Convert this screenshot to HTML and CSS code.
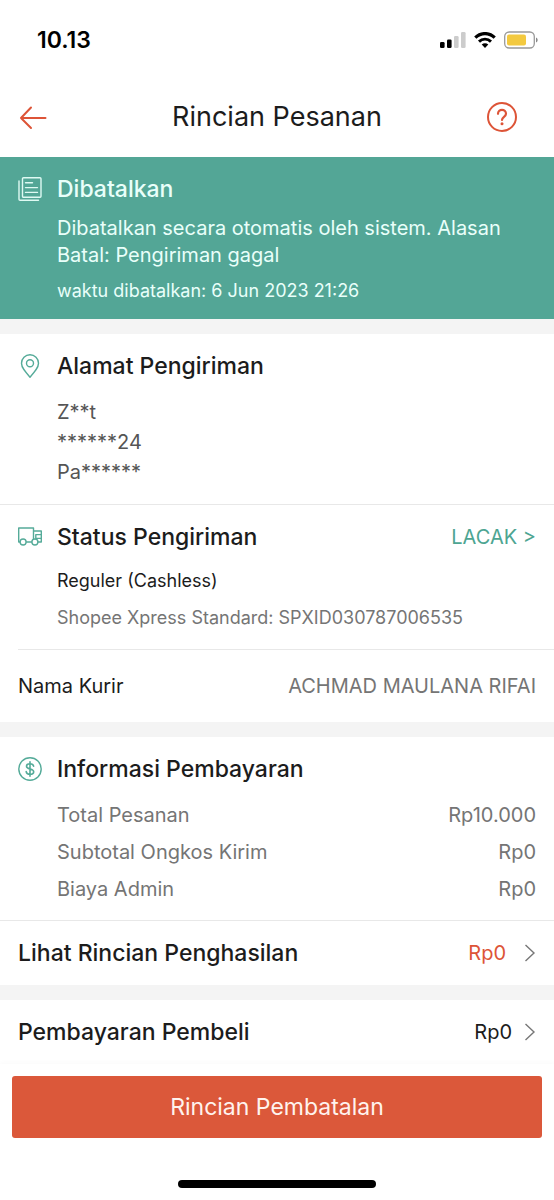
FILE: index.html
```html
<!DOCTYPE html>
<html lang="id">
<head>
<meta charset="utf-8">
<meta name="viewport" content="width=device-width, initial-scale=1">
<title>Rincian Pesanan</title>
<link rel="stylesheet" href="styles.css">
</head>
<body>
<div class="status-bar">
  <span class="clock">10.13</span>
  <div class="indicators">
    <svg width="26" height="16" viewBox="0 0 26 16" aria-hidden="true">
      <rect x="0" y="10" width="4.600" height="6" rx="1.300" fill="#000"/>
      <rect x="7" y="7.500" width="4.600" height="8.500" rx="1.300" fill="#000"/>
      <rect x="14" y="4" width="4.600" height="12" rx="1.300" fill="#ccc"/>
      <rect x="21" y="0" width="4.600" height="16" rx="1.300" fill="#ccc"/>
    </svg>
    <svg width="22" height="16" viewBox="0 0 22 16" aria-hidden="true">
      <path d="M1.300 5.600C6.800.2 15.200.2 20.700 5.600" fill="none" stroke="#000" stroke-width="3.200"/>
      <path d="M5 9.600c3.400-3.300 8.600-3.300 12 0" fill="none" stroke="#000" stroke-width="2.900"/>
      <path d="M11 16l-3.300-3.400c1.900-1.700 4.700-1.700 6.600 0z" fill="#000"/>
    </svg>
    <svg width="34" height="18" viewBox="0 0 34 18" aria-hidden="true">
      <rect x=".7" y="1" width="29.600" height="16" rx="4.500" fill="none" stroke="#999" stroke-width="1.300"/>
      <rect x="3" y="3.500" width="19" height="11" rx="2" fill="#f3c93f"/>
      <path d="M32 6.500c2.200.7 2.200 4.300 0 5z" fill="#888"/>
    </svg>
  </div>
</div>

<header class="nav">
  <button class="icon-button" type="button" aria-label="Kembali">
    <svg width="30" height="30" viewBox="0 0 30 30" fill="none" stroke="#dd5437" stroke-width="2" stroke-linecap="round" stroke-linejoin="round" aria-hidden="true"><path d="M27.500 16H3M13 5.500L3 16l10 10"/></svg>
  </button>
  <h1 class="nav-title">Rincian Pesanan</h1>
  <button class="icon-button help" type="button" aria-label="Bantuan">
    <svg width="30" height="30" viewBox="0 0 30 30" fill="none" stroke="#dd5437" stroke-width="2" stroke-linecap="round" aria-hidden="true"><circle cx="15" cy="15" r="14"/><path stroke-width="2.200" d="M11 11.800c0-5.300 8-5.300 8 0 0 3-4 3.200-4 6.200"/><circle cx="15" cy="21.800" r="1.500" fill="#dd5437" stroke="none"/></svg>
  </button>
</header>

<main>
  <section class="section section-banner">
    <div class="section-head">
      <svg class="section-icon" viewBox="0 0 24 24" fill="none" stroke="#dffaf3" stroke-width="1.400" stroke-linecap="round" stroke-linejoin="round" aria-hidden="true"><rect x="4.500" y=".8" width="18.500" height="19.500" rx="1"/><path d="M1 4v18.200q0 1 1 1h18.500M7.500 5.800h7M7.500 10.600h12M7.500 15.400h12"/></svg>
      <h2 class="heading">Dibatalkan</h2>
    </div>
    <p class="banner-text">Dibatalkan secara otomatis oleh sistem. Alasan Batal: Pengiriman gagal</p>
    <p class="banner-time">waktu dibatalkan: 6 Jun 2023 21:26</p>
  </section>

  <section class="section section-address gap-before">
    <div class="section-head">
      <svg class="section-icon" viewBox="0 0 24 24" fill="none" stroke="#55ab99" stroke-width="1.400" stroke-linejoin="round" aria-hidden="true"><path d="M12 23.200C7 17.500 3.500 13.500 3.500 9.200a8.500 8.500 0 0 1 17 0c0 4.300-3.500 8.300-8.500 14z"/><circle cx="12" cy="9.300" r="3.500"/></svg>
      <h2 class="heading">Alamat Pengiriman</h2>
    </div>
    <address class="address">Z**t<br>******24<br>Pa******</address>
  </section>

  <section class="section-shipping">
    <div class="section shipping">
      <div class="section-head">
        <svg class="section-icon" viewBox="0 0 24 24" fill="none" stroke="#55ab99" stroke-width="1.400" stroke-linejoin="round" aria-hidden="true"><path d="M2.100 17H.7V3h14.800v14H8.100M15.500 6h7.800v11h-3.400M23.300 9.600h-5.500v3.800h5.500M14 17h-5.900"/><circle cx="5.100" cy="17" r="3"/><circle cx="16.900" cy="17" r="3" fill="#fff"/></svg>
        <h2 class="heading">Status Pengiriman</h2>
        <a class="track" href="#lacak">LACAK &gt;</a>
      </div>
      <p class="service">Reguler (Cashless)</p>
      <p class="courier">Shopee Xpress Standard: SPXID030787006535</p>
    </div>
    <dl class="driver">
      <dt>Nama Kurir</dt>
      <dd class="muted">ACHMAD MAULANA RIFAI</dd>
    </dl>
  </section>

  <section class="section section-payment gap-before">
    <div class="section-head">
      <svg class="section-icon" viewBox="0 0 24 24" fill="none" stroke="#55ab99" stroke-width="1.400" stroke-linecap="round" aria-hidden="true"><circle cx="12" cy="12" r="11.200"/><path stroke-width="1.600" d="M15.600 9.200c-.3-1.700-1.700-2.500-3.600-2.500-2 0-3.500.9-3.500 2.500 0 3.700 7.200 1.700 7.200 5.500 0 1.700-1.600 2.600-3.700 2.600s-3.600-.9-3.800-2.700M12 4.700v14.600"/></svg>
      <h2 class="heading">Informasi Pembayaran</h2>
    </div>
    <dl class="costs muted">
      <div class="cost"><dt>Total Pesanan</dt><dd>Rp10.000</dd></div>
      <div class="cost"><dt>Subtotal Ongkos Kirim</dt><dd>Rp0</dd></div>
      <div class="cost"><dt>Biaya Admin</dt><dd>Rp0</dd></div>
    </dl>
  </section>

  <a class="link-row" href="#penghasilan">
    <span class="heading">Lihat Rincian Penghasilan</span>
    <span class="amount amount-accent">Rp0</span>
    <svg class="chevron" viewBox="0 0 12 18" aria-hidden="true"><path d="M1.500 1l8.500 8-8.500 8"/></svg>
  </a>
  <a class="link-row gap-before" href="#pembeli">
    <span class="heading">Pembayaran Pembeli</span>
    <span class="amount amount-near">Rp0</span>
    <svg class="chevron" viewBox="0 0 12 18" aria-hidden="true"><path d="M1.500 1l8.500 8-8.500 8"/></svg>
  </a>
</main>

<footer class="footer">
  <button class="primary" type="button">Rincian Pembatalan</button>
  <div class="home-indicator"></div>
</footer>
</body>
</html>
```
FILE: styles.css
```css
* { box-sizing: border-box; }

body {
  margin: 0;
  min-height: 100vh;
  display: flex;
  flex-direction: column;
  background: #fff;
  color: #1c1c1c;
  font-family: Inter, "Liberation Sans", sans-serif;
  font-size: 20px;
}

h1, h2, p, dl, dd { margin: 0; }
a { color: inherit; text-decoration: none; }
button { border: 0; padding: 0; background: none; font: inherit; cursor: pointer; }
svg { display: block; flex: none; }

.status-bar {
  display: flex;
  justify-content: space-between;
  align-items: center;
  height: 80px;
  padding: 0 16px 0 37px;
}
.clock { color: #000; font-size: 23px; font-weight: 600; }
.indicators { display: flex; align-items: center; gap: 8px; }

.nav {
  display: grid;
  grid-template-columns: 1fr auto 1fr;
  align-items: center;
  height: 77px;
  padding: 0 18px 4px;
}
.icon-button { width: 30px; height: 30px; }
.help { justify-self: end; margin-right: 19px; }
.nav-title { font-size: 27px; font-weight: 400; line-height: 36px; }

.section { padding: 18px 18px 12px 57px; }
.section-head { display: flex; align-items: center; margin-left: -39px; }
.section-icon { width: 24px; height: 24px; margin-right: 15px; }
.heading { font-size: 23px; font-weight: 500; line-height: 28px; }
.gap-before { border-top: 15px solid #f4f4f4; }
.muted { color: #757575; }

.section-banner { padding-bottom: 16px; background: #53a696; color: #e9fffa; }
.banner-text { margin-top: 12px; font-size: 20px; line-height: 27px; }
.banner-time { margin-top: 10px; font-size: 18px; line-height: 24px; }

.section-address { padding-bottom: 17px; }
.address { margin-top: 17px; color: #555; font-style: normal; line-height: 30px; }

.section-shipping { border-top: 1px solid #e8e8e8; }
.shipping { padding-bottom: 19px; }
.track { margin-left: auto; color: #4da592; }
.service, .courier { font-size: 18px; line-height: 24px; }
.service { margin-top: 18px; }
.courier { margin-top: 13px; color: #757575; }
.driver {
  display: flex;
  justify-content: space-between;
  align-items: center;
  min-height: 73px;
  margin-left: 18px;
  padding-right: 18px;
  border-top: 1px solid #e8e8e8;
}

.costs { margin-top: 14px; }
.cost { display: flex; justify-content: space-between; line-height: 37px; }

.link-row { display: flex; align-items: center; min-height: 64px; padding: 0 18px; }
.section-payment + .link-row { min-height: 65px; border-top: 1px solid #e8e8e8; }
.link-row.gap-before { min-height: 79px; }
.amount { margin-left: auto; margin-right: 18px; }
.amount-accent { color: #dd5437; }
.amount-near { margin-right: 12px; }
.chevron { width: 12px; height: 18px; fill: none; stroke: #777; stroke-width: 1.4; }

.footer { margin-top: auto; padding: 12px; box-shadow: 0 -2px 4px rgba(0, 0, 0, .02); }
.primary {
  display: block;
  width: 100%;
  height: 62px;
  border-radius: 3px;
  background: #db583a;
  color: #fff3ee;
  font-size: 23px;
}
.home-indicator { width: 198px; height: 8px; margin: 42px auto 0; border-radius: 4px; background: #000; }
```
